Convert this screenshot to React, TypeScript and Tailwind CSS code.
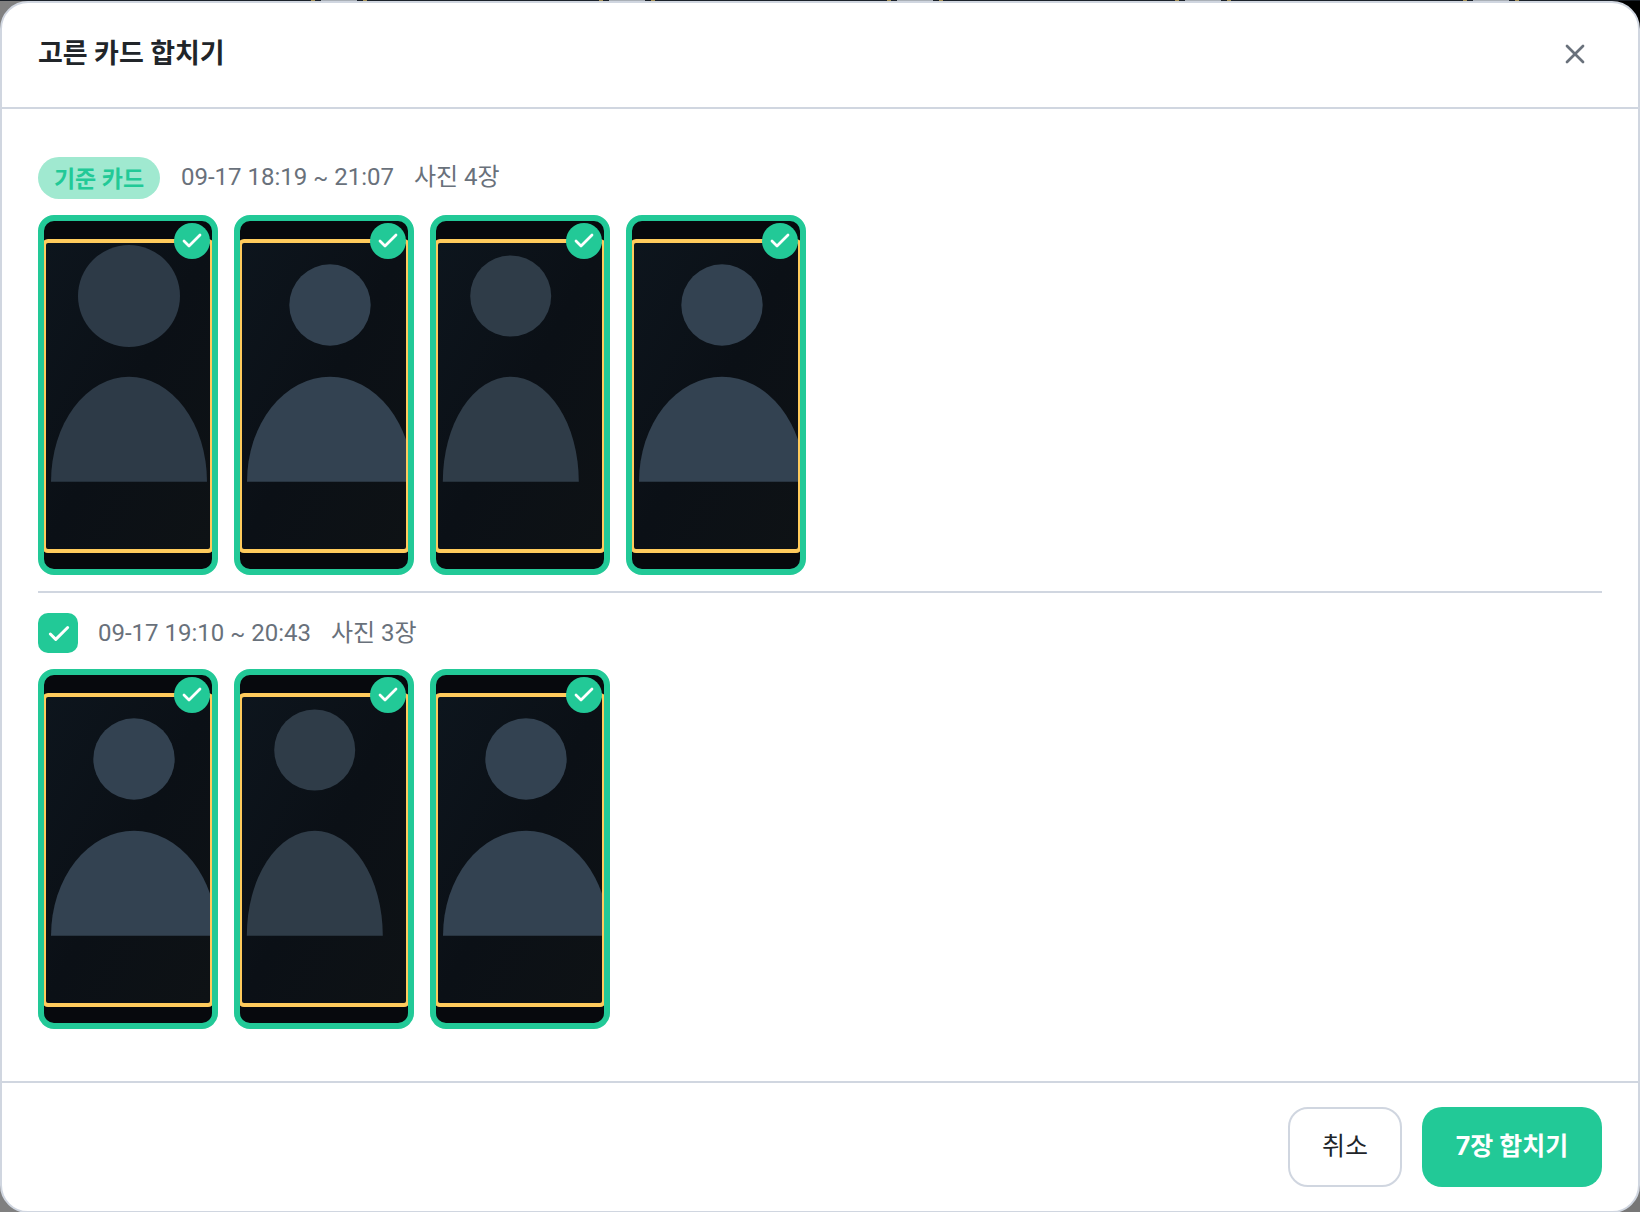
import { Check, X } from "lucide-react";

type Shot = { head: [number, number, number]; body: [number, number]; tone: string };

const wide = (tone = "#334251"): Shot => ({ head: [90, 84, 40.7], body: [90, 83], tone });
const slim: Shot = { head: [74.7, 75, 40.5], body: [74.8, 68], tone: "#2f3c48" };

const baseShots: Shot[] = [
  { head: [85, 75, 51], body: [85, 78], tone: "#2d3a47" },
  wide(),
  slim,
  wide(),
];
const otherShots: Shot[] = [wide(), slim, wide()];

const PhotoCard = ({ shot }: { shot: Shot }) => {
  const [cx, cy, r] = shot.head;
  const [bx, rx] = shot.body;
  return (
    <div className="relative h-[360px] w-[180px] shrink-0 overflow-hidden rounded-[16px] border-[6px] border-[#22c997] bg-[#07090d]">
      <div className="absolute left-[-2px] top-[18px] h-[314px] w-[172px] overflow-hidden rounded-[6px] border-4 border-[#ffcb5c] bg-linear-to-br from-[#0d151d] via-[#0b1016] to-[#0e1215]">
        <svg width="164" height="306" viewBox="2 22 164 306" className="block">
          <circle cx={cx} cy={cy} r={r} fill={shot.tone} />
          <path d={`M${bx - rx} 260.7 A${rx} 105 0 0 1 ${bx + rx} 260.7 Z`} fill={shot.tone} />
        </svg>
      </div>
      <div className="absolute right-[2px] top-[2px] flex h-9 w-9 items-center justify-center rounded-full bg-[#22c997]">
        <Check size={24} strokeWidth={2.75} className="text-white" />
      </div>
    </div>
  );
};

const RowMeta = ({ range, end, count }: { range: string; end: string; count: number }) => (
  <div className="flex gap-5 font-['Roboto','Noto_Sans_CJK_KR',sans-serif] text-[24px] leading-[32px] text-[#69717b]">
    <span>
      {range} <span className="text-[22px]">~</span> {end}
    </span>
    <span>사진 {count}장</span>
  </div>
);

export default function App() {
  return (
    <div className="relative h-[1212px] w-[1640px] overflow-hidden bg-[#808080] font-['Inter','Noto_Sans_CJK_KR',sans-serif]">
      {/* what is left of the page behind the dialog */}
      <div className="absolute right-0 top-0 h-10 w-10 bg-black" />
      <div className="absolute bottom-0 right-0 h-10 w-10 bg-[#777777]" />
      <div className="absolute left-0 top-0 flex h-px w-full bg-[#1b2129] pl-[311px]">
        {[0, 1, 2, 3, 4].map((i) => (
          <div key={i} className="flex w-[288px] shrink-0">
            <div className="h-px w-1 bg-[#a8935a]" />
            <div className="ml-[6px] h-px w-[36px] bg-[#a9afb6]" />
            <div className="ml-[6px] h-px w-1 bg-[#a8935a]" />
          </div>
        ))}
      </div>

      <div className="relative mt-px flex h-[1212px] w-[1640px] flex-col overflow-hidden rounded-[28px] border-2 border-[#d0d6e0] bg-white">
        <header className="flex h-[106px] shrink-0 items-center justify-between border-b-2 border-[#d0d6e0] pb-[2px] pl-9 pr-[47px]">
          <h2 className="text-[27px] font-bold text-[#212529]">고른 카드 합치기</h2>
          <X size={32} strokeWidth={2} className="text-[#69717b]" />
        </header>

        <main className="flex flex-1 flex-col px-9 pt-12">
          <div className="flex items-center gap-5">
            <span className="flex h-[42px] w-[122px] items-center justify-center rounded-full bg-[#a0e9d0] pt-[2px] text-[23px] font-bold text-[#22c997]">
              기준 카드
            </span>
            <div className="-mt-[2px] ml-px">
              <RowMeta range="09-17 18:19" end="21:07" count={4} />
            </div>
          </div>
          <div className="mt-4 flex gap-4">
            {baseShots.map((shot, i) => (
              <PhotoCard key={i} shot={shot} />
            ))}
          </div>

          <div className="mt-4 border-t-2 border-[#d0d6e0] pt-5">
            <div className="flex items-center gap-5">
              <span className="flex h-10 w-10 items-center justify-center rounded-[10px] bg-[#22c997] pl-[2px] pt-[1px]">
                <Check size={26} strokeWidth={2.75} className="text-white" />
              </span>
              <RowMeta range="09-17 19:10" end="20:43" count={3} />
            </div>
            <div className="mt-4 flex gap-4">
              {otherShots.map((shot, i) => (
                <PhotoCard key={i} shot={shot} />
              ))}
            </div>
          </div>
        </main>

        <footer className="flex h-[130px] shrink-0 items-center justify-end gap-5 border-t-2 border-[#d0d6e0] px-9">
          <button className="h-20 w-[114px] rounded-[20px] border-2 border-[#d0d6e0] bg-white text-[25px] text-[#212529]">
            취소
          </button>
          <button className="h-20 w-[180px] rounded-[20px] bg-[#22c997] text-[25px] font-bold text-white">
            7장 합치기
          </button>
        </footer>
      </div>
    </div>
  );
}
